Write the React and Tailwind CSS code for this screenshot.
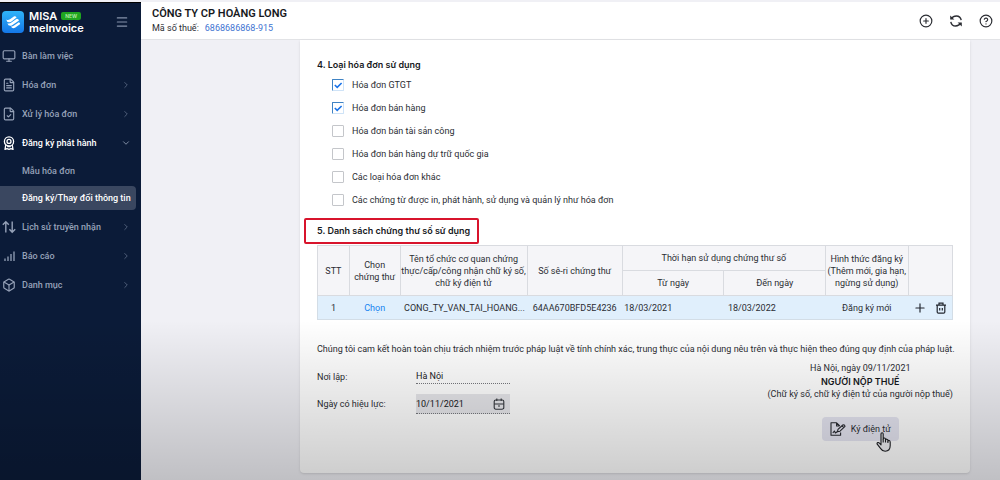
import { useState } from "react";
import {
  Monitor,
  FileText,
  FileCheck,
  Box,
  ChevronRight,
  ChevronDown,
  Menu,
  CirclePlus,
  CircleQuestionMark,
  Plus,
} from "lucide-react";

function AwardIcon() {
  return (
    <svg viewBox="0 0 14 14" className="size-[14px] shrink-0" fill="none" stroke="currentColor" strokeWidth="1.3" strokeLinejoin="round" aria-hidden="true">
      <circle cx="7" cy="5.4" r="4.6" />
      <circle cx="7" cy="5.4" r="2" />
      <path d="M3.8 8.8 3 13.4 5 12.6 7 13.4 9 12.6 11 13.4 10.2 8.8M5.2 10.6H8.8" />
    </svg>
  );
}

function TransferIcon() {
  return (
    <svg viewBox="0 0 14 14" className="size-[14px] shrink-0" fill="none" stroke="currentColor" strokeWidth="1.4" aria-hidden="true">
      <path d="M3.8 12.6V2M.8 4.8 3.8 1.8 6.8 4.8M10.2 1.4V12M7.4 9.2 10.2 12.2 13.2 9.2" />
    </svg>
  );
}

function BarsIcon() {
  return (
    <svg viewBox="0 0 14 14" className="size-[14px] shrink-0" fill="none" stroke="currentColor" strokeWidth="1.3" aria-hidden="true">
      <path d="M3 12V9.6M6 12V7.4M9 12V5M12 12V2.6" />
    </svg>
  );
}

const menu = [
  { name: "Bàn làm việc", icon: Monitor },
  { name: "Hóa đơn", icon: FileText, more: true },
  { name: "Xử lý hóa đơn", icon: FileCheck, more: true },
  {
    name: "Đăng ký phát hành",
    icon: AwardIcon,
    open: true,
    children: [
      { name: "Mẫu hóa đơn" },
      { name: "Đăng ký/Thay đổi thông tin", active: true },
    ],
  },
  { name: "Lịch sử truyền nhận", icon: TransferIcon, more: true },
  { name: "Báo cáo", icon: BarsIcon, more: true },
  { name: "Danh mục", icon: Box, more: true },
];

const invoiceTypes = [
  { name: "Hóa đơn GTGT", checked: true },
  { name: "Hóa đơn bán hàng", checked: true },
  { name: "Hóa đơn bán tài sản công", checked: false },
  { name: "Hóa đơn bán hàng dự trữ quốc gia", checked: false },
  { name: "Các loại hóa đơn khác", checked: false },
  { name: "Các chứng từ được in, phát hành, sử dụng và quản lý như hóa đơn", checked: false },
];

const certificates = [
  {
    org: "CONG_TY_VAN_TAI_HOANG...",
    serial: "64AA670BFD5E4236",
    from: "18/03/2021",
    to: "18/03/2022",
    type: "Đăng ký mới",
  },
];

function Logo() {
  return (
    <svg viewBox="0 0 22 22" className="size-[22px] shrink-0" aria-hidden="true">
      <defs>
        <linearGradient id="logo" x1="0" y1="0" x2="0" y2="1">
          <stop offset="0" stopColor="#2fb4f8" />
          <stop offset="1" stopColor="#1477e8" />
        </linearGradient>
      </defs>
      <rect width="22" height="22" rx="4" fill="url(#logo)" />
      <g fill="#fff">
        <path d="M4.2 8.4Q6 9.6 8 8.2L12.2 5.2Q14 5 14.6 6.6L8.8 10.9Q5.2 12.4 4.2 8.4Z" />
        <path d="M5.4 12.2Q7.4 13 9.4 11.6L14.8 7.7Q16.6 7.8 17 9.4L9.8 14.4Q6.4 15.6 5.4 12.2Z" />
        <path d="M9 15.5Q10.6 15.6 12 14.6L16.8 11.2Q18.2 11.6 18.2 13L13.4 16.6Q10.2 18.4 9 15.5Z" />
      </g>
    </svg>
  );
}

function Sidebar() {
  return (
    <aside className="w-[141px] shrink-0 border-t border-black bg-[#0b1b38] text-[#96a2b8]">
      <div className="flex h-[38px] items-center pl-[2px] pr-3">
        <Logo />
        <div className="ml-[5px] flex-1 font-['Inter',sans-serif] text-[11px] font-semibold leading-3 text-white">
          <div className="flex items-center gap-1">
            MISA
            <span className="flex h-2 items-center rounded-[2px] bg-[#1fa51f] px-1 text-[5px] leading-none text-[#b9eeb0]">
              NEW
            </span>
          </div>
          <div>meInvoice</div>
        </div>
        <button type="button" aria-label="Menu" className="text-[#8592a9]">
          <Menu size={14} strokeWidth={2} />
        </button>
      </div>
      <nav>
        {menu.map((item) => (
          <div key={item.name}>
            <a
              href="#"
              className={`flex h-[29px] items-center gap-[6px] pl-[2px] pr-[10px] font-medium ${
                item.open ? "text-white" : ""
              }`}
            >
              <item.icon size={14} strokeWidth={2} />
              <span className="flex-1 whitespace-nowrap">{item.name}</span>
              {item.more && <ChevronRight size={10} className="text-[#5d6b85]" />}
              {item.open && <ChevronDown size={10} className="text-[#96a2b8]" />}
            </a>
            {item.children && (
              <div className="flex flex-col gap-[3px] py-[2px] pr-[5px]">
                {item.children.map((child) => (
                  <a
                    key={child.name}
                    href="#"
                    className={`flex h-6 items-center whitespace-nowrap pl-[22px] font-medium ${
                      child.active ? "rounded-r bg-[#3a4760] text-white" : ""
                    }`}
                  >
                    {child.name}
                  </a>
                ))}
              </div>
            )}
          </div>
        ))}
      </nav>
    </aside>
  );
}

function RefreshIcon() {
  return (
    <svg viewBox="0 0 14 14" className="size-[14px]" fill="none" stroke="currentColor" strokeWidth="1.4" aria-hidden="true">
      <path d="M2.4 4.8Q4 2 7.4 2 11.4 2 12.2 6.2M11.6 9.2Q10 12 6.6 12 2.6 12 1.8 7.8" />
      <path d="M1.2 1.4V5.6H5.4ZM12.8 12.6V8.4H8.6Z" fill="currentColor" stroke="none" />
    </svg>
  );
}

function Header() {
  return (
    <header className="flex h-[38px] items-center justify-between border-b border-[#e2e3e6] bg-white pl-[11px] pr-[7px]">
      <div>
        <h1 className="text-[11px] font-semibold leading-[14px] text-[#17191d]">CÔNG TY CP HOÀNG LONG</h1>
        <p className="flex gap-[6px] leading-[14px]">
          Mã số thuế:
          <a href="#" className="text-[#3f74d1]">6868686868-915</a>
        </p>
      </div>
      <div className="flex gap-4 text-[#2b2d33]">
        <button type="button" aria-label="Thêm"><CirclePlus size={14} /></button>
        <button type="button" aria-label="Tải lại"><RefreshIcon /></button>
        <button type="button" aria-label="Trợ giúp"><CircleQuestionMark size={14} /></button>
      </div>
    </header>
  );
}

function Checkbox({ label, defaultChecked }) {
  const [checked, setChecked] = useState(defaultChecked);
  return (
    <label className="flex h-[23px] items-center gap-2">
      <span className="grid size-3">
        <input
          type="checkbox"
          checked={checked}
          onChange={(e) => setChecked(e.target.checked)}
          className="col-start-1 row-start-1 size-3 appearance-none rounded-[1px] border border-[#c4c6ca] bg-white checked:border-[#cfe3f7] checked:border-l-[#3f83c4] checked:border-t-[#3f83c4]"
        />
        {checked && (
          <svg viewBox="0 0 12 12" className="pointer-events-none col-start-1 row-start-1 size-3" aria-hidden="true">
            <path d="M2.8 6 5.2 8.3 9.6 4" fill="none" stroke="#1a73e8" strokeWidth="1.6" />
          </svg>
        )}
      </span>
      {label}
    </label>
  );
}

function TrashIcon() {
  return (
    <svg viewBox="0 0 12 12" className="size-3" fill="none" stroke="currentColor" strokeWidth="1.2" aria-hidden="true">
      <path d="M1 3.2H11M4 3V1.2H8V3M2.2 3.4V10Q2.2 11.2 3.4 11.2H8.6Q9.8 11.2 9.8 10V3.4M4.7 6V8.5M7.3 6V8.5" />
    </svg>
  );
}

function CalendarIcon() {
  return (
    <svg viewBox="0 0 12 12" className="size-3 shrink-0" fill="none" stroke="#33363c" strokeWidth="1.1" aria-hidden="true">
      <rect x="1.2" y="2" width="9.6" height="9.2" rx="1.6" />
      <path d="M3.8 .5V3M8.2 .5V3M1.2 6H10.8M5 8H7" />
    </svg>
  );
}

function SignIcon() {
  return (
    <svg viewBox="0 0 16 14" className="h-[14px] w-4" fill="none" stroke="#26282e" strokeWidth="1.1" strokeLinejoin="round" aria-hidden="true">
      <path d="M10.6 10.4V13.2H1V.8H6.6L9.8 4M6.6 .8V4H9.8" />
      <path d="M7.4 9.8 8 7.4 12.8 3Q14.6 2.4 15 4.4L10 9.2ZM12 3.8 13.8 5.6" />
      <path d="M2.8 11 4.4 9 5.4 11 7.2 9.8" />
    </svg>
  );
}

function HandCursor() {
  return (
    <svg
      viewBox="0 0 16 20"
      className="pointer-events-none absolute left-[54px] top-[15px] h-5 w-4"
      fill="#eeeef2"
      stroke="#1d1e22"
      strokeWidth="1.1"
      strokeLinejoin="round"
      aria-hidden="true"
    >
      <path d="M5 11.8V2Q5 .7 6.1 .7T7.2 2V7Q7.4 5.9 8.4 6T9.5 7.2V8Q9.8 7 10.8 7.2T11.9 8.5V9Q12.3 8.2 13.2 8.5T14.2 10V13.5Q14.2 19.2 9.2 19.2 6.3 19.2 4.7 16.6L1.2 12.2Q.7 11 1.7 10.6 2.7 10.3 3.5 11.2L5 12.8Z" />
      <path d="M7.2 7V10.5M9.5 8V10.5M11.9 9V11" fill="none" />
    </svg>
  );
}

function CertificateTable() {
  const th = "border border-[#d9dbe0] font-normal px-0";
  return (
    <table className="w-full table-fixed border-collapse text-center leading-3">
      <colgroup>
        <col className="w-[5%]" />
        <col className="w-[8%]" />
        <col className="w-[20%]" />
        <col className="w-[15%]" />
        <col className="w-[16%]" />
        <col className="w-[16%]" />
        <col className="w-[13%]" />
        <col className="w-[7%]" />
      </colgroup>
      <thead className="whitespace-nowrap bg-[#f5f5f8]">
        <tr className="h-[25px]">
          <th rowSpan={2} className={th}>STT</th>
          <th rowSpan={2} className={th}>Chọn<br />chứng thư</th>
          <th rowSpan={2} className={th}>Tên tổ chức cơ quan chứng<br />thực/cấp/công nhận chữ ký số,<br />chữ ký điện tử</th>
          <th rowSpan={2} className={th}>Số sê-ri chứng thư</th>
          <th colSpan={2} className={th}>Thời hạn sử dụng chứng thư số</th>
          <th rowSpan={2} className={th}>Hình thức đăng ký<br />(Thêm mới, gia hạn,<br />ngừng sử dụng)</th>
          <th rowSpan={2} className={th} />
        </tr>
        <tr className="h-[25px]">
          <th className={th}>Từ ngày</th>
          <th className={th}>Đến ngày</th>
        </tr>
      </thead>
      <tbody>
        {certificates.map((cert, i) => (
          <tr key={cert.serial} className="h-6 whitespace-nowrap border border-[#d3dde6] bg-[#e0effc]">
            <td>{i + 1}</td>
            <td><button type="button" className="text-[#1583f0]">Chọn</button></td>
            <td className="pl-1 text-left">{cert.org}</td>
            <td>{cert.serial}</td>
            <td className="px-[2px] text-left">{cert.from}</td>
            <td className="px-1 text-left">{cert.to}</td>
            <td>{cert.type}</td>
            <td>
              <div className="flex items-center justify-center gap-2 text-[#22272f]">
                <button type="button" aria-label="Thêm dòng"><Plus size={14} /></button>
                <button type="button" aria-label="Xóa dòng"><TrashIcon /></button>
              </div>
            </td>
          </tr>
        ))}
      </tbody>
    </table>
  );
}

export default function App() {
  return (
    <div className="relative flex min-h-screen flex-col bg-[#f0f0f5] pt-[2px] font-['Roboto','Liberation_Sans',sans-serif] text-[9px] leading-[14px] text-[#2b2d33]">
      <div className="flex flex-1">
        <Sidebar />
        <div className="min-w-0 flex-1">
          <Header />
          <main className="mb-[7px] ml-[159px] mr-[30px] rounded-b bg-white px-[17px] pb-8 pt-[18px] shadow">
            <h2 className="font-['Inter',sans-serif] font-semibold text-[#17191d]">4. Loại hóa đơn sử dụng</h2>
            <div className="mt-px pl-[15px]">
              {invoiceTypes.map((type) => (
                <Checkbox key={type.name} label={type.name} defaultChecked={type.checked} />
              ))}
            </div>
            <h2 className="-ml-[13px] mb-px mt-[7px] flex h-[26px] w-[175px] items-center rounded-[2px] border-2 border-[#d8142c] pl-[11px] font-['Inter',sans-serif] font-semibold text-[#17191d]">
              5. Danh sách chứng thư số sử dụng
            </h2>
            <CertificateTable />
            <p className="mt-[22px] min-[1000px]:whitespace-nowrap">
              Chúng tôi cam kết hoàn toàn chịu trách nhiệm trước pháp luật về tính chính xác, trung thực của nội dung nêu
              trên và thực hiện theo đúng quy định của pháp luật.
            </p>
            <div className="mt-[6px] flex items-start justify-between">
              <div className="flex flex-col gap-[10px] pt-[7px]">
                <div className="flex items-center">
                  <label htmlFor="place" className="w-[99px]">Nơi lập:</label>
                  <input
                    id="place"
                    defaultValue="Hà Nội"
                    className="h-[15px] w-[94px] border-b border-dotted border-[#77797e] bg-transparent text-[#17191d]"
                  />
                </div>
                <div className="flex items-center">
                  <label htmlFor="effective" className="w-[99px]">Ngày có hiệu lực:</label>
                  <div className="flex h-5 w-[94px] items-center border-b border-dotted border-[#77797e] bg-[#e6e6ea] pr-[5px]">
                    <input
                      id="effective"
                      defaultValue="10/11/2021"
                      className="min-w-0 flex-1 bg-transparent text-[#17191d]"
                    />
                    <CalendarIcon />
                  </div>
                </div>
              </div>
              <div className="flex flex-col items-center text-center leading-[13px]">
                <p>Hà Nội, ngày 09/11/2021</p>
                <p className="font-['Inter',sans-serif] font-semibold text-[#17191d]">NGƯỜI NỘP THUẾ</p>
                <p>(Chữ ký số, chữ ký điện tử của người nộp thuế)</p>
                <button
                  type="button"
                  className="relative mt-4 flex h-6 items-center gap-[5px] rounded bg-[#e6e6f2] px-2"
                >
                  <SignIcon />
                  Ký điện tử
                  <HandCursor />
                </button>
              </div>
            </div>
          </main>
        </div>
      </div>
      <div className="pointer-events-none absolute inset-x-0 bottom-0 h-40 bg-linear-to-b from-transparent to-black/20" />
    </div>
  );
}
